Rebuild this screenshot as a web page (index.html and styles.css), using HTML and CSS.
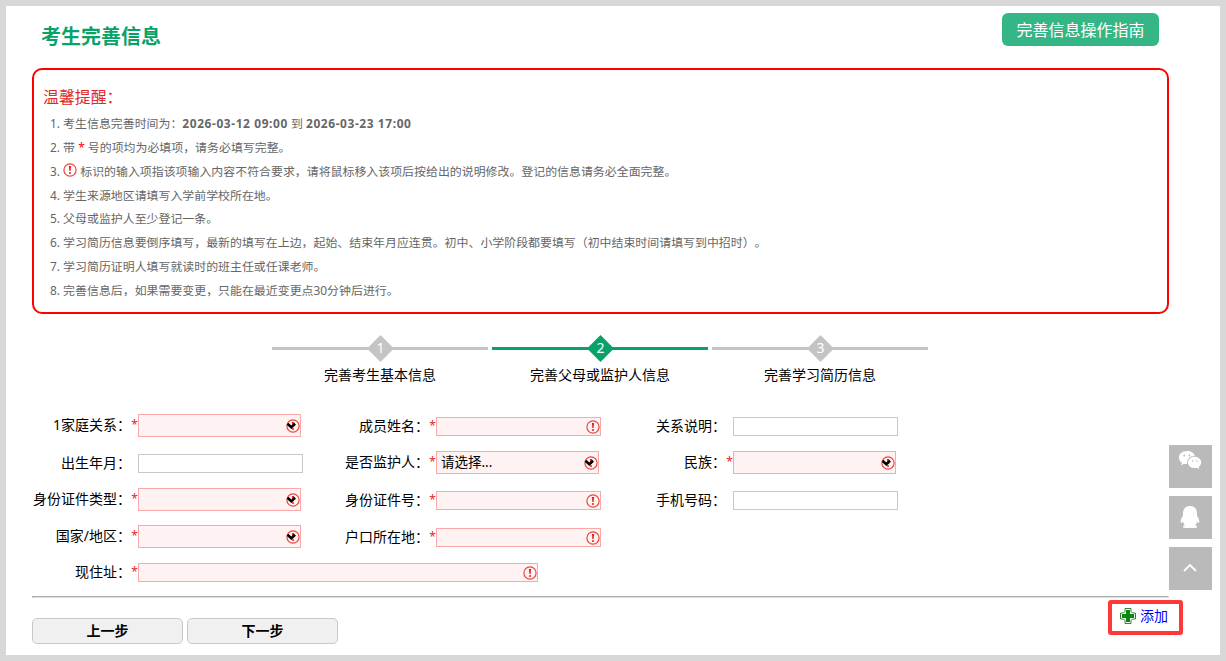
FILE: index.html
```html
<!DOCTYPE html>
<html lang="zh-CN">
<head>
    <meta charset="UTF-8">
    <title>考生完善信息</title>
    <link rel="stylesheet" href="styles.css">
</head>
<body>
    <svg class="icon-defs" width="0" height="0">
        <symbol id="icon-warn" viewBox="0 0 14 14">
            <circle cx="7" cy="7" r="6.1" fill="none" stroke="#e8473f" stroke-width="1.2"/>
            <path d="M5.9 3h2.2l-.5 5.1H6.4z" fill="#e02020"/>
            <circle cx="7" cy="9.9" r="1" fill="#e02020"/>
        </symbol>
        <symbol id="icon-arrow" viewBox="0 0 14 14">
            <use href="#icon-warn"/>
            <path d="M1.500 4.800L5.300 8.200 9.100 4.800" fill="none" stroke="#000" stroke-width="2.6"/>
        </symbol>
    </svg>

    <div class="page">
        <div class="header">
            <h1>考生完善信息</h1>
            <a class="guide-button">完善信息操作指南</a>
        </div>

        <div class="tips">
            <h2>温馨提醒：</h2>
            <ul>
                <li>1. 考生信息完善时间为：<b>2026-03-12 09:00</b> 到 <b>2026-03-23 17:00</b></li>
                <li>2. 带 <span class="red">*</span> 号的项均为必填项，请务必填写完整。</li>
                <li>3. <svg class="tip-icon"><use href="#icon-warn"/></svg> 标识的输入项指该项输入内容不符合要求，请将鼠标移入该项后按给出的说明修改。登记的信息请务必全面完整。</li>
                <li>4. 学生来源地区请填写入学前学校所在地。</li>
                <li>5. 父母或监护人至少登记一条。</li>
                <li>6. 学习简历信息要倒序填写，最新的填写在上边，起始、结束年月应连贯。初中、小学阶段都要填写（初中结束时间请填写到中招时）。</li>
                <li>7. 学习简历证明人填写就读时的班主任或任课老师。</li>
                <li>8. 完善信息后，如果需要变更，只能在最近变更点30分钟后进行。</li>
            </ul>
        </div>

        <div class="steps">
            <div class="step">
                <div class="step-line"><div class="diamond"><span>1</span></div></div>
                <p>完善考生基本信息</p>
            </div>
            <div class="step active">
                <div class="step-line"><div class="diamond"><span>2</span></div></div>
                <p>完善父母或监护人信息</p>
            </div>
            <div class="step">
                <div class="step-line"><div class="diamond"><span>3</span></div></div>
                <p>完善学习简历信息</p>
            </div>
        </div>

        <form class="form">
            <div class="field select required">
                <label>1家庭关系：</label><i>*</i>
                <div class="control"><select></select><svg><use href="#icon-arrow"/></svg></div>
            </div>
            <div class="field required">
                <label>成员姓名：</label><i>*</i>
                <div class="control"><input type="text"><svg><use href="#icon-warn"/></svg></div>
            </div>
            <div class="field">
                <label>关系说明：</label><i></i>
                <div class="control"><input type="text"></div>
            </div>

            <div class="field">
                <label>出生年月：</label><i></i>
                <div class="control"><input type="text"></div>
            </div>
            <div class="field select required">
                <label>是否监护人：</label><i>*</i>
                <div class="control"><select><option>请选择...</option></select><svg><use href="#icon-arrow"/></svg></div>
            </div>
            <div class="field select required">
                <label>民族：</label><i>*</i>
                <div class="control"><select></select><svg><use href="#icon-arrow"/></svg></div>
            </div>

            <div class="field select required">
                <label>身份证件类型：</label><i>*</i>
                <div class="control"><select></select><svg><use href="#icon-arrow"/></svg></div>
            </div>
            <div class="field required">
                <label>身份证件号：</label><i>*</i>
                <div class="control"><input type="text"><svg><use href="#icon-warn"/></svg></div>
            </div>
            <div class="field">
                <label>手机号码：</label><i></i>
                <div class="control"><input type="text"></div>
            </div>

            <div class="field select required">
                <label>国家/地区：</label><i>*</i>
                <div class="control"><select></select><svg><use href="#icon-arrow"/></svg></div>
            </div>
            <div class="field required">
                <label>户口所在地：</label><i>*</i>
                <div class="control"><input type="text"><svg><use href="#icon-warn"/></svg></div>
            </div>

            <div class="field required wide">
                <label>现住址：</label><i>*</i>
                <div class="control"><input type="text"><svg><use href="#icon-warn"/></svg></div>
            </div>
        </form>

        <hr>

        <div class="footer">
            <div class="buttons">
                <button type="button">上一步</button>
                <button type="button">下一步</button>
            </div>
            <a class="add">
                <svg width="16" height="16" viewBox="0 0 16 16">
                    <path d="M5 .5h6v3l1.500 1.500h3v6h-3L11 12.500v3H5v-3L3.500 11h-3V5h3L5 3.500z" fill="#fff" stroke="#3d7a3d"/>
                    <path d="M6 2h4v4h4v4h-4v4H6v-4H2V6h4z" fill="#0a8a0a"/>
                </svg>
                添加
            </a>
        </div>
    </div>

    <div class="side-bar">
        <a class="side-item wechat">
            <svg width="24" height="20" viewBox="0 0 24 20">
                <path d="M9 1C4.300 1 1 3.900 1 7.500c0 2.200 1.100 3.900 2.900 5.200L3 15.200l3-1.500c1.100.3 2.100.4 3.400.3-1.300-5 2.900-8.300 7.500-8C16.200 3 13 1 9 1z" fill="#fff"/>
                <path d="M16.700 6.800c-3.900 0-6.700 2.600-6.700 5.600 0 3.200 3 5.700 6.700 5.700.8 0 1.600-.2 2.300-.4l2.300 1.300-.6-2.200c1.500-1.100 2.500-2.600 2.500-4.400 0-3-2.900-5.600-6.500-5.600z" fill="#fff"/>
                <g fill="#bababa">
                    <circle cx="6.200" cy="5.500" r=".9"/><circle cx="11.400" cy="5.500" r=".9"/>
                    <circle cx="14.600" cy="11" r=".8"/><circle cx="18.900" cy="11" r=".8"/>
                </g>
            </svg>
        </a>
        <a class="side-item">
            <svg width="20" height="24" viewBox="0 0 20 24">
                <path d="M10 1C5.500 1 3 4.200 3 8.300v2.200C1.700 12.500.5 15 .7 17c.2 1.700 1.200.7 2.100-.6.3 1.500 1 2.800 2 3.800-1.300.5-2 1-2 1.700 0 1.200 5.700 1.300 7.200.8 1.500.5 7.200.4 7.200-.8 0-.7-.7-1.200-2-1.700 1-1 1.700-2.300 2-3.800.9 1.300 1.900 2.300 2.100.6.200-2-1-4.500-2.300-6.500V8.300C17 4.200 14.500 1 10 1z" fill="#fff"/>
            </svg>
        </a>
        <a class="side-item">
            <svg width="14" height="10" viewBox="0 0 14 10">
                <path d="M1 8l6-6 6 6" fill="none" stroke="#fff" stroke-width="1.800"/>
            </svg>
        </a>
    </div>
</body>
</html>
```
FILE: styles.css
```css
* {
    box-sizing: border-box;
}
body {
    margin: 0;
    height: 661px;
    border: 6px solid #d8d8d8;
    background-color: #fff;
    font-family: "Noto Sans", "Noto Sans CJK SC", sans-serif;
    font-size: 14px;
    line-height: 20px;
    color: #000;
    text-spacing-trim: space-all;
    overflow: hidden;
}
h1, h2, ul, p {
    margin: 0;
    padding: 0;
    font-weight: normal;
}
.icon-defs {
    display: block;
}
.page {
    width: 1137px;
    margin-left: 26px;
}

/* Header */
.header {
    display: flex;
    justify-content: space-between;
    align-items: flex-start;
    height: 62px;
    padding: 7px 10px 0 9px;
}
h1 {
    margin-top: 9px;
    font-size: 20px;
    line-height: 30px;
    font-weight: 700;
    color: #08a268;
}
.guide-button {
    width: 157px;
    height: 33px;
    border-radius: 6px;
    background-color: #35b686;
    color: #fff;
    font-size: 16px;
    line-height: 35px;
    text-align: center;
}

/* Tips */
.tips {
    height: 246px;
    padding: 16px 9px;
    border: 2px solid #f00;
    border-radius: 10px;
}
.tips h2 {
    font-size: 15.9px;
    line-height: 22px;
    color: #e02a2a;
}
.tips ul {
    margin-top: 4px;
    padding-left: 7px;
    list-style: none;
}
.tips li {
    height: 23.85px;
    font-size: 11.93px;
    line-height: 23.85px;
    color: #666;
    white-space: nowrap;
}
.tips b {
    letter-spacing: 0.6px;
}
.tips .red {
    color: #f00;
}
.tip-icon {
    width: 14px;
    height: 14px;
    vertical-align: -1px;
}

/* Steps */
.steps {
    display: flex;
    gap: 4px;
    height: 93px;
    margin-left: 240px;
    padding-top: 21px;
}
.step {
    width: 216px;
    text-align: center;
}
.step-line {
    display: flex;
    align-items: center;
    justify-content: center;
    height: 27px;
    background: linear-gradient(#c4c4c4, #c4c4c4) center / 100% 3px no-repeat;
}
.diamond {
    width: 19px;
    height: 19px;
    margin-left: 1px;
    background-color: #c4c4c4;
    color: #fff;
    line-height: 17px;
    transform: rotate(45deg);
}
.diamond span {
    display: block;
    height: 19px;
    transform: rotate(-45deg);
}
.step.active .step-line {
    background-image: linear-gradient(#08a268, #08a268);
}
.step.active .diamond {
    background-color: #08a268;
}
.step p {
    margin-top: 3px;
}

/* Form */
.form {
    display: grid;
    grid-template-columns: 272px 297px 300px;
    grid-template-rows: repeat(4, 37px) 33px;
}
.field {
    display: flex;
    align-items: center;
    padding-top: 2px;
}
.field.select {
    padding-top: 0;
}
.field label {
    flex: none;
    width: 99px;
    padding-bottom: 2px;
    text-align: right;
    white-space: nowrap;
}
.field:nth-child(3n + 2) label {
    width: 125px;
}
.field:nth-child(3n) label {
    width: 125px;
}
.field i {
    flex: none;
    width: 7px;
    padding-bottom: 2px;
    font-style: normal;
    font-size: 12px;
    text-align: center;
    color: #e02a2a;
}
.control {
    position: relative;
    display: flex;
    flex: none;
    width: 165px;
    height: 19px;
}
.select .control {
    width: 163px;
    height: 23px;
}
.control input,
.control select {
    width: 100%;
    height: 100%;
    margin: 0;
    padding: 0 5px 1px 4px;
    border: 1px solid #c8c8c8;
    border-radius: 0;
    background-color: #fff;
    appearance: none;
    font-family: inherit;
    font-size: 13.5px;
    color: #000;
}
.required input,
.required select {
    border-color: #faa8a8;
    background-color: #fff2f2;
}
.control svg {
    position: absolute;
    top: 50%;
    right: 1px;
    width: 14px;
    height: 14px;
    margin-top: -7px;
}
.form .wide {
    grid-column: 1 / 4;
    grid-row: 5;
}
.form .wide label {
    width: 99px;
}
.wide .control {
    width: 400px;
}
hr {
    margin: 8px 0 0;
    width: 1137px;
    border: 1px solid;
    border-color: #a9adab #e2e2e2 #dcdedd #a9adab;
}

/* Footer */
.footer {
    display: flex;
    justify-content: space-between;
}
.buttons {
    display: flex;
    gap: 4px;
    padding-top: 20px;
}
button {
    width: 151px;
    height: 26px;
    padding: 0 0 2px;
    border: 1px solid #c9c9c9;
    border-radius: 5px;
    background-color: #f0f0f0;
    font-family: inherit;
    font-size: 14px;
    font-weight: 700;
    color: #000;
}
.add {
    display: flex;
    align-items: center;
    gap: 4px;
    width: 75px;
    height: 35px;
    margin: 2px -14px 0 0;
    padding: 0 0 3px 8px;
    border: 4px solid #ff3838;
    border-radius: 3px;
    color: #00f;
    white-space: nowrap;
}

/* Floating tools */
.side-bar {
    position: absolute;
    top: 445px;
    right: 14px;
    display: flex;
    flex-direction: column;
    gap: 8px;
}
.side-item {
    display: flex;
    align-items: center;
    justify-content: center;
    width: 43px;
    height: 43px;
    padding: 0 2px 2px 0;
    background-color: #bababa;
}
.side-item.wechat {
    padding-bottom: 14px;
}
```
